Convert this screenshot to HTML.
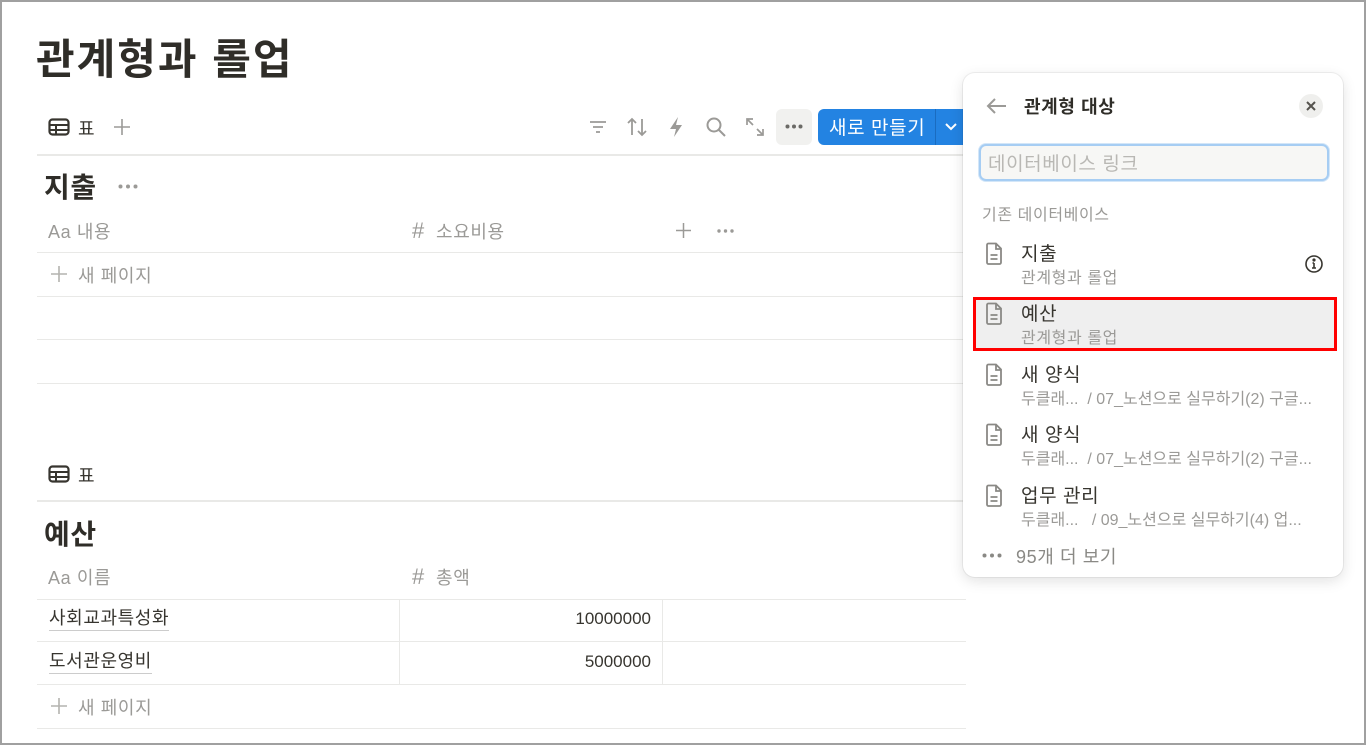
<!DOCTYPE html>
<html><head><meta charset="utf-8"><style>
*{box-sizing:border-box;margin:0;padding:0}
body{width:1366px;height:745px;overflow:hidden;background:#fff;font-family:"Liberation Sans","Noto Sans CJK KR",sans-serif;color:#37352f;position:relative}
.frame{position:absolute;left:0;top:0;width:1366px;height:745px;border:2px solid #a0a0a0;pointer-events:none;z-index:9}
.a{position:absolute;white-space:nowrap}
.hl{position:absolute;left:37px;width:929px;height:1px;background:#e9e9e7}
.vl{position:absolute;width:1px;background:#e9e9e7}
.g{color:#9b9a97}
.k{letter-spacing:0.6px}
svg{position:absolute}
</style></head><body>
<div class="frame"></div>
<div class="a" style="left:36px;top:26px;font-size:42px;font-weight:bold;color:#2f2d28;letter-spacing:2px">관계형과 롤업</div>

<svg style="left:48px;top:118px" width="22" height="18" viewBox="0 0 22 18"><rect x="1.5" y="1.5" width="19" height="15" rx="3" fill="none" stroke="#37352f" stroke-width="2.2"/><path d="M1.5 7h19M1.5 12h19M8 7v9.5" stroke="#37352f" stroke-width="2"/></svg>
<div class="a" style="left:78px;top:115px;font-size:18px">표</div>
<svg style="left:113px;top:118px" width="18" height="18" viewBox="0 0 18 18" stroke="#9b9a97" stroke-width="1.6"><path d="M9 1v16M1 9h16"/></svg>

<svg style="left:588px;top:118px" width="20" height="18" viewBox="0 0 20 18" fill="none" stroke="#9b9a97" stroke-width="1.8"><path d="M2 4h16M5 9h10M8 14h4"/></svg>
<svg style="left:626px;top:116px" width="22" height="22" viewBox="0 0 22 22" fill="none" stroke="#9b9a97" stroke-width="1.8"><path d="M6 19V3M2 7l4-4 4 4M16 3v16M12 15l4 4 4-4"/></svg>
<svg style="left:667px;top:116px" width="18" height="22" viewBox="0 0 18 22"><path d="M11 1L3 13h6l-2 8 8-12H9z" fill="#9b9a97"/></svg>
<svg style="left:705px;top:116px" width="22" height="22" viewBox="0 0 22 22" fill="none" stroke="#9b9a97" stroke-width="2"><circle cx="9" cy="9" r="6.5"/><path d="M14 14l6 6"/></svg>
<svg style="left:745px;top:117px" width="20" height="20" viewBox="0 0 20 20" fill="none" stroke="#9b9a97" stroke-width="1.7"><path d="M2 8V2h6M2 2l6 6M18 12v6h-6M18 18l-6-6"/></svg>
<div class="a" style="left:776px;top:109px;width:36px;height:36px;background:#f1f1ef;border-radius:6px"></div>
<svg style="left:785px;top:124px" width="18" height="5" viewBox="0 0 18 5" fill="#6b6a66"><circle cx="2.5" cy="2.5" r="2"/><circle cx="9" cy="2.5" r="2"/><circle cx="15.5" cy="2.5" r="2"/></svg>
<div class="a" style="left:818px;top:109px;width:148px;height:36px;background:#2383e2;border-radius:6px 0 0 6px"></div>
<div class="a k" style="left:829px;top:113px;font-size:19px;color:#fff">새로 만들기</div>
<div class="a" style="left:935px;top:109px;width:1px;height:36px;background:#1a6cc0"></div>
<svg style="left:944px;top:121px" width="14" height="12" viewBox="0 0 14 12" fill="none" stroke="#fff" stroke-width="2"><path d="M2 3l5 5 5-5"/></svg>

<div class="hl" style="top:154px;height:2px"></div>
<div class="a k" style="left:44px;top:166px;font-size:28px;font-weight:bold;color:#2f2d28">지출</div>
<svg style="left:118px;top:184px" width="20" height="5" viewBox="0 0 20 5" fill="#9b9a97"><circle cx="2.5" cy="2.5" r="2"/><circle cx="10" cy="2.5" r="2"/><circle cx="17.5" cy="2.5" r="2"/></svg>
<div class="a g k" style="left:48px;top:218px;font-size:18px">Aa 내용</div>
<div class="a g k" style="left:412px;top:218px;font-size:18px"><span style="font-size:22px">#</span>&nbsp; 소요비용</div>
<svg style="left:676px;top:223px" width="15" height="15" viewBox="0 0 15 15" stroke="#9b9a97" stroke-width="1.5"><path d="M7.5 0v15M0 7.5h15"/></svg>
<svg style="left:717px;top:229px" width="17" height="4" viewBox="0 0 17 4" fill="#9b9a97"><circle cx="2" cy="2" r="1.7"/><circle cx="8.5" cy="2" r="1.7"/><circle cx="15" cy="2" r="1.7"/></svg>
<div class="hl" style="top:252px"></div>
<svg style="left:51px;top:266px" width="16" height="16" viewBox="0 0 16 16" stroke="#b4b3af" stroke-width="1.6"><path d="M8 0v16M0 8h16"/></svg>
<div class="a g k" style="left:78px;top:262px;font-size:18px">새 페이지</div>
<div class="hl" style="top:296px"></div>
<div class="hl" style="top:339px"></div>
<div class="hl" style="top:383px"></div>

<svg style="left:48px;top:465px" width="22" height="18" viewBox="0 0 22 18"><rect x="1.5" y="1.5" width="19" height="15" rx="3" fill="none" stroke="#37352f" stroke-width="2.2"/><path d="M1.5 7h19M1.5 12h19M8 7v9.5" stroke="#37352f" stroke-width="2"/></svg>
<div class="a" style="left:78px;top:462px;font-size:18px">표</div>
<div class="hl" style="top:500px;height:2px"></div>
<div class="a k" style="left:44px;top:513px;font-size:28px;font-weight:bold;color:#2f2d28">예산</div>
<div class="a g k" style="left:48px;top:564px;font-size:18px">Aa 이름</div>
<div class="a g k" style="left:412px;top:564px;font-size:18px"><span style="font-size:22px">#</span>&nbsp; 총액</div>
<div class="hl" style="top:599px"></div>
<div class="a k" style="left:49px;top:607px;font-size:18px;border-bottom:1px solid #ccc;line-height:23px">사회교과특성화</div>
<div class="a" style="left:480px;top:609px;width:171px;text-align:right;font-size:17px">10000000</div>
<div class="hl" style="top:641px"></div>
<div class="a k" style="left:49px;top:650px;font-size:18px;border-bottom:1px solid #ccc;line-height:23px">도서관운영비</div>
<div class="a" style="left:480px;top:652px;width:171px;text-align:right;font-size:17px">5000000</div>
<div class="hl" style="top:684px"></div>
<div class="vl" style="left:399px;top:599px;height:85px"></div>
<div class="vl" style="left:662px;top:599px;height:85px"></div>
<svg style="left:51px;top:698px" width="16" height="16" viewBox="0 0 16 16" stroke="#b4b3af" stroke-width="1.6"><path d="M8 0v16M0 8h16"/></svg>
<div class="a g k" style="left:78px;top:694px;font-size:18px">새 페이지</div>
<div class="hl" style="top:728px"></div>

<div class="a" style="left:963px;top:73px;width:380px;height:504px;background:#fff;border-radius:12px;box-shadow:0 0 0 1px rgba(15,15,15,.06),0 4px 14px rgba(15,15,15,.12)"></div>
<svg style="left:986px;top:97px" width="22" height="18" viewBox="0 0 22 18" fill="none" stroke="#9b9a97" stroke-width="2"><path d="M20 9H3M9 2L2 9l7 7"/></svg>
<div class="a k" style="left:1024px;top:93px;font-size:18px;font-weight:bold;color:#2f2d28">관계형 대상</div>
<div class="a" style="left:1299px;top:94px;width:24px;height:24px;border-radius:50%;background:#efefed"></div>
<svg style="left:1304px;top:99px" width="14" height="14" viewBox="0 0 14 14" stroke="#55534e" stroke-width="2"><path d="M3 3l8 8M11 3l-8 8"/></svg>
<div class="a" style="left:979px;top:144px;width:350px;height:37px;border:2px solid #a6cdf3;border-radius:7px;background:#f7f7f5;box-shadow:0 0 0 1px #d3e6f8"></div>
<div class="a k" style="left:988px;top:149px;font-size:19px;color:#b9b8b4">데이터베이스 링크</div>
<div class="a g k" style="left:982px;top:201px;font-size:16px">기존 데이터베이스</div>

<div class="a" style="left:973px;top:297px;width:364px;height:54px;background:#efefef;border:3px solid #f00"></div>

<div class="a k" style="left:1021px;top:239px;font-size:19px">지출</div>
<div class="a g k" style="left:1021px;top:264px;font-size:16px">관계형과 롤업</div>
<div class="a k" style="left:1021px;top:299px;font-size:19px">예산</div>
<div class="a g k" style="left:1021px;top:324px;font-size:16px">관계형과 롤업</div>
<div class="a k" style="left:1021px;top:360px;font-size:19px">새 양식</div>
<div class="a g" style="left:1021px;top:385px;font-size:16px">두클래...&nbsp; / 07_노션으로 실무하기(2) 구글...</div>
<div class="a k" style="left:1021px;top:420px;font-size:19px">새 양식</div>
<div class="a g" style="left:1021px;top:445px;font-size:16px">두클래...&nbsp; / 07_노션으로 실무하기(2) 구글...</div>
<div class="a k" style="left:1021px;top:481px;font-size:19px">업무 관리</div>
<div class="a g" style="left:1021px;top:506px;font-size:16px">두클래...&nbsp;&nbsp; / 09_노션으로 실무하기(4) 업...</div>

<svg style="left:985px;top:242px" width="18" height="24" viewBox="0 0 18 24" fill="none" stroke="#8a8985" stroke-width="1.8"><path d="M2 3a1.5 1.5 0 011.5-1.5H11l5 5V20.5A1.5 1.5 0 0114.5 22h-11A1.5 1.5 0 012 20.5z M11 1.5V7h5M5.5 13h7M5.5 17h7"/></svg>
<svg style="left:985px;top:302px" width="18" height="24" viewBox="0 0 18 24" fill="none" stroke="#8a8985" stroke-width="1.8"><path d="M2 3a1.5 1.5 0 011.5-1.5H11l5 5V20.5A1.5 1.5 0 0114.5 22h-11A1.5 1.5 0 012 20.5z M11 1.5V7h5M5.5 13h7M5.5 17h7"/></svg>
<svg style="left:985px;top:363px" width="18" height="24" viewBox="0 0 18 24" fill="none" stroke="#8a8985" stroke-width="1.8"><path d="M2 3a1.5 1.5 0 011.5-1.5H11l5 5V20.5A1.5 1.5 0 0114.5 22h-11A1.5 1.5 0 012 20.5z M11 1.5V7h5M5.5 13h7M5.5 17h7"/></svg>
<svg style="left:985px;top:423px" width="18" height="24" viewBox="0 0 18 24" fill="none" stroke="#8a8985" stroke-width="1.8"><path d="M2 3a1.5 1.5 0 011.5-1.5H11l5 5V20.5A1.5 1.5 0 0114.5 22h-11A1.5 1.5 0 012 20.5z M11 1.5V7h5M5.5 13h7M5.5 17h7"/></svg>
<svg style="left:985px;top:484px" width="18" height="24" viewBox="0 0 18 24" fill="none" stroke="#8a8985" stroke-width="1.8"><path d="M2 3a1.5 1.5 0 011.5-1.5H11l5 5V20.5A1.5 1.5 0 0114.5 22h-11A1.5 1.5 0 012 20.5z M11 1.5V7h5M5.5 13h7M5.5 17h7"/></svg>

<svg style="left:1304px;top:254px" width="20" height="20" viewBox="0 0 20 20" fill="none" stroke="#37352f" stroke-width="1.6"><circle cx="10" cy="10" r="8"/><path d="M10 9v5M8 14h4M8.5 9H10"/><circle cx="10" cy="6" r=".8" fill="#37352f"/></svg>

<svg style="left:982px;top:553px" width="20" height="5" viewBox="0 0 20 5" fill="#8a8985"><circle cx="2.5" cy="2.5" r="2"/><circle cx="10" cy="2.5" r="2"/><circle cx="17.5" cy="2.5" r="2"/></svg>
<div class="a k" style="left:1016px;top:543px;font-size:18px;color:#8a8985">95개 더 보기</div>
</body></html>
